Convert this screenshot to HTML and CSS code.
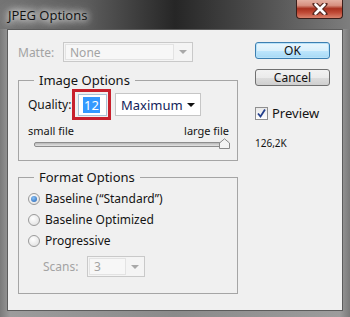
FILE: index.html
```html
<!DOCTYPE html>
<html lang="en">

<head>
    <meta charset="UTF-8">
    <title>JPEG Options</title>
    <link rel="stylesheet" href="styles.css">
</head>

<body>
    <div class="window">
        <!-- Title bar -->
        <div class="titlebar">
            <span class="title">JPEG Options</span>
            <div class="close-btn">
                <svg width="20" height="12" viewBox="0 0 20 12">
                    <path d="M5 1 L15 11 M15 1 L5 11" stroke="#5a2a22" stroke-width="5" stroke-linecap="round"/>
                    <path d="M5.5 1.5 L14.5 10.5 M14.5 1.5 L5.5 10.5" stroke="#fff" stroke-width="2.6" stroke-linecap="round"/>
                </svg>
            </div>
        </div>

        <!-- Dialog body -->
        <div class="client">
            <div class="main">
                <div class="matte-row">
                    <span class="label disabled">Matte:</span>
                    <div class="combo matte-combo">
                        <span class="combo-text">None</span>
                        <span class="combo-arrow"><span class="tri grey"></span></span>
                    </div>
                </div>

                <fieldset class="group image-group">
                    <legend>Image Options</legend>
                    <div class="quality-row">
                        <span class="label">Quality:</span>
                        <div class="highlight">
                            <div class="quality-input"><span class="selected">12</span></div>
                        </div>
                        <div class="dropdown">
                            <span>Maximum</span>
                            <span class="tri black"></span>
                        </div>
                    </div>
                    <div class="slider-labels">
                        <span>small file</span>
                        <span>large file</span>
                    </div>
                    <div class="slider">
                        <div class="track"></div>
                        <svg class="thumb" width="11" height="11" viewBox="0 0 11 11">
                            <path d="M0.5 10.5 L0.5 5 L5.5 0.8 L10.5 5 L10.5 10.5 Z" fill="#f4f4f4" stroke="#8a8a8a"/>
                        </svg>
                    </div>
                </fieldset>

                <fieldset class="group format-group">
                    <legend>Format Options</legend>
                    <div class="radio-row"><span class="radio checked"></span>Baseline (“Standard”)</div>
                    <div class="radio-row"><span class="radio"></span>Baseline Optimized</div>
                    <div class="radio-row"><span class="radio"></span>Progressive</div>
                    <div class="scans-row">
                        <span class="label disabled">Scans:</span>
                        <div class="combo scans-combo">
                            <span class="combo-text">3</span>
                            <span class="combo-arrow"><span class="tri grey"></span></span>
                        </div>
                    </div>
                </fieldset>
            </div>

            <div class="side">
                <button class="btn ok">OK</button>
                <button class="btn">Cancel</button>
                <div class="preview">
                    <span class="checkbox">
                        <svg width="11" height="11" viewBox="0 0 11 11">
                            <path d="M2 5.5 L4.5 8.5 L9 1.5" fill="none" stroke="#233f8c" stroke-width="1.8"/>
                        </svg>
                    </span>
                    Preview
                </div>
                <div class="size">126,2K</div>
            </div>
        </div>
    </div>
</body>

</html>
```

FILE: styles.css
```css
body {
    margin: 0;
    padding: 0;
    font-family: "Noto Sans", "Open Sans", sans-serif;
    font-size: 12px;
    color: #141414;
}

.window {
    width: 350px;
    height: 317px;
    box-sizing: border-box;
    background: linear-gradient(to right, #7a7a7a, #9c9c9c 3%, #8a8a8a 50%, #9c9c9c 97%, #7a7a7a);
    display: flex;
    flex-direction: column;
}

/* Title bar */
.titlebar {
    height: 29px;
    display: flex;
    align-items: flex-start;
    background: linear-gradient(to right, #747474 0%, #5c5c5c 25%, #262626 50%, #474747 70%, #7e7e7e 100%);
}

.title {
    margin: 6px 0 0 8px;
    font-family: "Open Sans", sans-serif;
    font-size: 13px;
    color: #111;
    text-shadow: 0 0 6px #fff, 0 0 10px #fff, 0 0 14px rgba(255, 255, 255, 0.8);
}

.close-btn {
    margin-left: auto;
    margin-right: 7px;
    width: 45px;
    height: 18px;
    border: 1px solid #3a1e1a;
    border-top: none;
    border-radius: 0 0 4px 4px;
    background: linear-gradient(to bottom, #e4b0a2 0%, #d79080 30%, #a8301e 48%, #c04a36 70%, #d9826c 100%);
    display: flex;
    align-items: center;
    justify-content: center;
}

/* Client area */
.client {
    flex: 1;
    margin: 0 7px 6px 7px;
    border: 1px solid #5c5c5c;
    background-color: #f0f0f0;
    display: flex;
    padding: 12px 12px 0 10px;
}

.main {
    width: 221px;
}

.label {
    white-space: nowrap;
}

.disabled {
    color: #a3a3a3;
}

.matte-row {
    display: flex;
    align-items: center;
    height: 20px;
}

.matte-row .label {
    width: 45px;
}

.combo {
    box-sizing: border-box;
    display: flex;
    border: 1px solid #c9c9c9;
    background-color: #f4f4f4;
    color: #a3a3a3;
    padding: 1px;
}

.combo-text {
    flex: 1;
    border: 1px solid #e3e3e3;
    background-color: #f7f7f7;
    padding-left: 4px;
    line-height: 15px;
}

.combo-arrow {
    width: 17px;
    display: flex;
    align-items: center;
    justify-content: center;
}

.matte-combo {
    width: 130px;
    height: 20px;
}

.tri {
    width: 0;
    height: 0;
    border-left: 4px solid transparent;
    border-right: 4px solid transparent;
}

.tri.grey {
    border-top: 4px solid #a8a8a8;
}

.tri.black {
    border-top: 4px solid #111;
}

/* Group boxes */
.group {
    margin: 9px 0 0 0;
    border: 1px solid #a5a5a5;
    padding: 0 8px 0 9px;
}

.group legend {
    margin-left: 6px;
    padding: 0 5px;
    font-size: 13px;
    line-height: 18px;
}

.image-group {
    height: 90px;
    box-sizing: border-box;
}

.quality-row {
    display: flex;
    align-items: center;
}

.quality-row .label {
    width: 44px;
}

.highlight {
    box-sizing: border-box;
    width: 39px;
    height: 31px;
    border: 3px solid #c8202c;
    padding: 2px 1px 0 3px;
}

.quality-input {
    box-sizing: border-box;
    height: 22px;
    border: 1px solid #abc2d6;
    background-color: #fff;
    padding: 2px 0 0 4px;
}

.selected {
    display: inline-block;
    background-color: #3399ff;
    color: #fff;
    font-size: 13px;
    line-height: 16px;
    padding: 0 1px;
}

.dropdown {
    box-sizing: border-box;
    margin-left: 4px;
    width: 86px;
    height: 23px;
    border: 1px solid #c6c6c6;
    background-color: #fff;
    color: #121d5a;
    font-size: 13px;
    display: flex;
    align-items: center;
    justify-content: space-between;
    padding: 0 5px 0 5px;
}

.slider-labels {
    display: flex;
    justify-content: space-between;
    font-size: 11px;
    line-height: 13px;
    margin-top: 4px;
}

.slider {
    position: relative;
    height: 14px;
    margin: 0 0 0 6px;
}

.track {
    position: absolute;
    left: 0;
    right: 0;
    top: 5px;
    height: 3px;
    border: 1px solid #8d8d8d;
    border-radius: 2px;
    background: linear-gradient(to bottom, #b8b8b8, #e4e4e4);
}

.thumb {
    position: absolute;
    right: -1px;
    top: 1px;
}

.format-group {
    margin-top: 7px;
    height: 126px;
    box-sizing: border-box;
    padding-top: 2px;
}

.radio-row {
    display: flex;
    align-items: center;
    height: 21px;
    white-space: nowrap;
}

.radio {
    box-sizing: border-box;
    width: 12px;
    height: 12px;
    border-radius: 50%;
    border: 1px solid #9a9a9a;
    background: radial-gradient(circle at 40% 35%, #ffffff, #dcdcdc);
    margin-right: 5px;
    display: flex;
    align-items: center;
    justify-content: center;
}

.radio.checked::after {
    content: "";
    width: 6px;
    height: 6px;
    border-radius: 50%;
    background: radial-gradient(circle at 40% 35%, #8ac2f4, #1f5fb4);
}

.scans-row {
    display: flex;
    align-items: center;
    margin-top: 5px;
    padding-left: 15px;
}

.scans-row .label {
    width: 44px;
}

.scans-combo {
    width: 58px;
    height: 21px;
}

/* Right column */
.side {
    margin-left: 17px;
    width: 75px;
    display: flex;
    flex-direction: column;
}

.btn {
    box-sizing: border-box;
    width: 75px;
    height: 17px;
    margin: 0;
    padding: 0;
    border: 1px solid #707070;
    border-radius: 3px;
    font-family: "Noto Sans", sans-serif;
    font-size: 12px;
    line-height: 14px;
    color: #111;
    background: linear-gradient(to bottom, #f2f2f2 0%, #ebebeb 50%, #dddddd 51%, #cfcfcf 100%);
}

.btn.ok {
    border-color: #3c7fb1;
    background: linear-gradient(to bottom, #eaf6fd 0%, #d9f0fc 50%, #bee6fd 51%, #a7d9f5 100%);
    box-shadow: inset 0 0 0 1px #b8e2f9;
    margin-bottom: 10px;
}

.preview {
    display: flex;
    align-items: center;
    margin-top: 18px;
    font-size: 13px;
}

.checkbox {
    box-sizing: border-box;
    width: 13px;
    height: 13px;
    border: 1px solid #8f8f8f;
    background: linear-gradient(to bottom, #e8e8e8, #ffffff);
    margin-right: 4px;
    display: flex;
    align-items: center;
    justify-content: center;
}

.size {
    margin-top: 14px;
    font-size: 10px;
}
```
